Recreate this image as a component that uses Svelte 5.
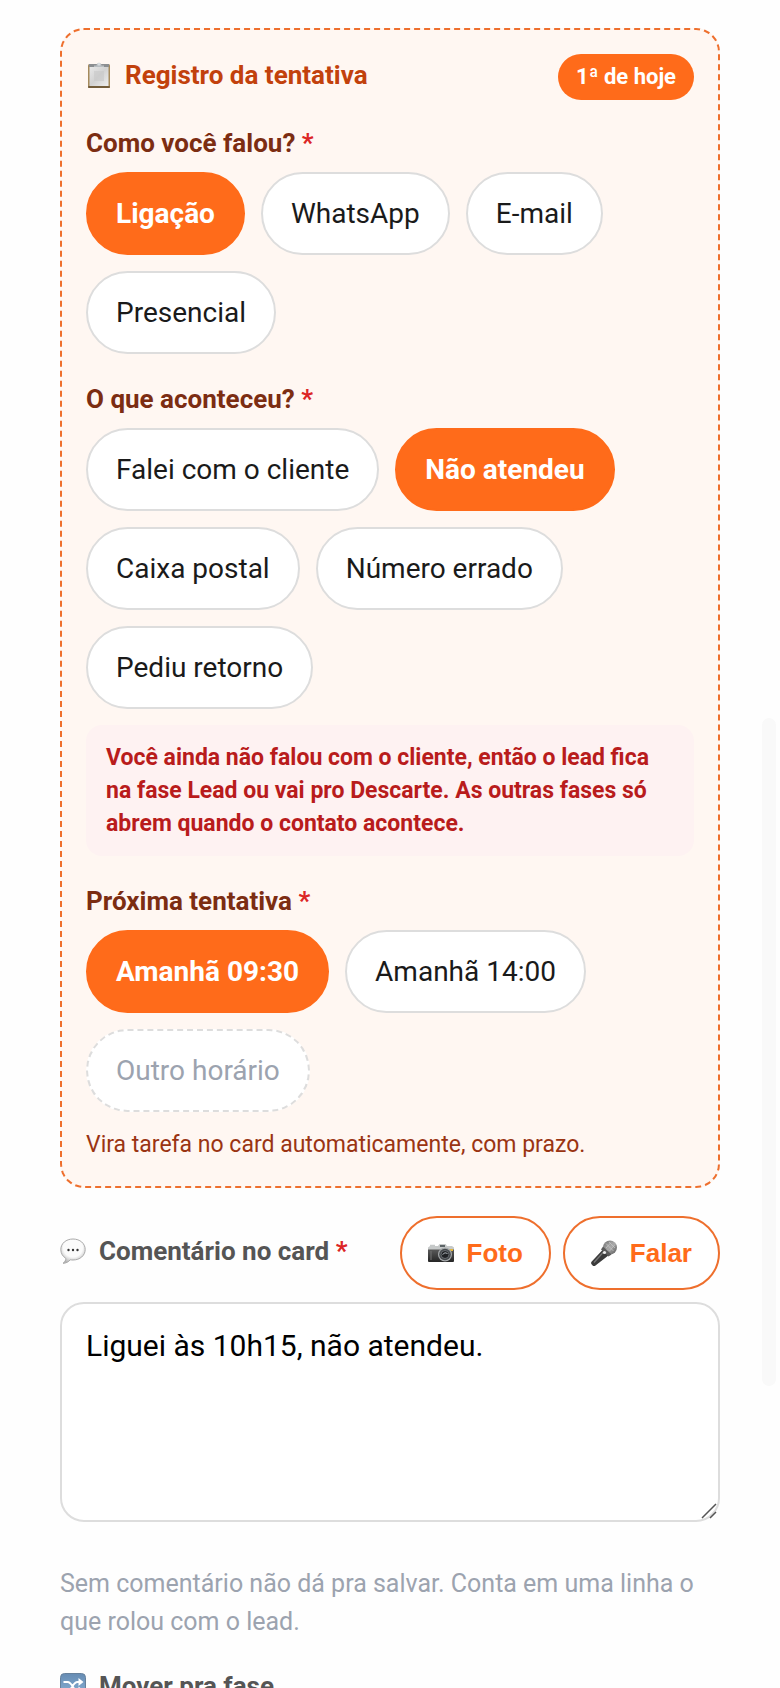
<script>
  const channels = ['Ligação', 'WhatsApp', 'E-mail', 'Presencial'];
  const outcomes = [
    'Falei com o cliente',
    'Não atendeu',
    'Caixa postal',
    'Número errado',
    'Pediu retorno'
  ];
  const slots = ['Amanhã 09:30', 'Amanhã 14:00', 'Outro horário'];

  let channel = $state('Ligação');
  let outcome = $state('Não atendeu');
  let slot = $state('Amanhã 09:30');
  let comment = $state('Liguei às 10h15, não atendeu.');
</script>

{#snippet chip(label, selected, onpick, dashed)}
  <button
    type="button"
    class="chip"
    class:selected
    class:dashed={dashed && !selected}
    aria-pressed={selected}
    onclick={onpick}
  >
    {label}
  </button>
{/snippet}

<div class="screen">
  <section class="attempt">
    <header class="attempt-head">
      <h2 class="title">
        <svg class="icon" viewBox="0 0 26 26" aria-hidden="true">
          <defs>
            <linearGradient id="paper" x1="0" y1="0" x2="1" y2="1">
              <stop offset="0" stop-color="#e9e9e9" />
              <stop offset="0.5" stop-color="#d2d2d2" />
              <stop offset="1" stop-color="#eeeeee" />
            </linearGradient>
          </defs>
          <rect x="2" y="2" width="22" height="24" rx="1.5" fill="#a58a5c" />
          <rect x="2" y="24" width="22" height="2" rx="1" fill="#735d3b" />
          <rect x="3.5" y="4" width="19" height="20" fill="url(#paper)" />
          <path d="M8 9h10v10H8z" fill="#c8c8c8" opacity=".6" />
          <path d="M3 2h20v3H3z" fill="#8b8e91" />
          <path d="M8 3.500h2.500a2.500 2.500 0 0 1 5 0H18V5H8z" fill="#b9bec2" />
          <circle cx="13" cy="2" r="1.500" fill="#d9dde0" />
        </svg>
        Registro da tentativa
      </h2>
      <span class="badge">1ª de hoje</span>
    </header>

    <div class="field" role="group" aria-labelledby="channel-label">
      <h3 class="label" id="channel-label">Como você falou? <span class="req">*</span></h3>
      <div class="chips">
        {#each channels as item}
          {@render chip(item, channel === item, () => (channel = item), false)}
        {/each}
      </div>
    </div>

    <div class="field" role="group" aria-labelledby="outcome-label">
      <h3 class="label" id="outcome-label">O que aconteceu? <span class="req">*</span></h3>
      <div class="chips">
        {#each outcomes as item}
          {@render chip(item, outcome === item, () => (outcome = item), false)}
        {/each}
      </div>
      {#if outcome !== 'Falei com o cliente'}
        <p class="warning">
          Você ainda não falou com o cliente, então o lead fica na fase Lead ou vai pro
          Descarte. As outras fases só abrem quando o contato acontece.
        </p>
      {/if}
    </div>

    <div class="field" role="group" aria-labelledby="slot-label">
      <h3 class="label" id="slot-label">Próxima tentativa <span class="req">*</span></h3>
      <div class="chips">
        {#each slots as item}
          {@render chip(item, slot === item, () => (slot = item), item === 'Outro horário')}
        {/each}
      </div>
      <p class="note">Vira tarefa no card automaticamente, com prazo.</p>
    </div>
  </section>

  <div class="comment-head">
    <label class="title dark" for="comment">
      <svg class="icon" viewBox="0 0 26 26" aria-hidden="true">
        <defs>
          <radialGradient id="bubble" cx="0.5" cy="0.35" r="0.65">
            <stop offset="0.6" stop-color="#fbfbfb" />
            <stop offset="1" stop-color="#b4b4b4" />
          </radialGradient>
        </defs>
        <path
          d="M13 1C6 1 .8 5.500.8 11.500c0 4 2 7 5 8.800.2 2-1 3.700-2.800 5 3 0 5.700-1.500 7.200-3.500.9.200 1.800.2 2.800.2 7 0 12.200-4.500 12.200-10.500S20 1 13 1z"
          fill="url(#bubble)"
          stroke="#aaaaaa"
          stroke-width="1"
        />
        <circle cx="8.500" cy="12" r="1.200" fill="#333333" />
        <circle cx="13" cy="12" r="1.200" fill="#333333" />
        <circle cx="17.500" cy="12" r="1.200" fill="#333333" />
      </svg>
      <span>Comentário no card <span class="req">*</span></span>
    </label>

    <div class="tools">
      <button type="button" class="tool">
        <svg class="icon" viewBox="0 0 26 26" aria-hidden="true">
          <defs>
            <linearGradient id="body" x1="0" y1="0" x2="0" y2="1">
              <stop offset="0" stop-color="#5a5a5a" />
              <stop offset="1" stop-color="#252525" />
            </linearGradient>
          </defs>
          <path d="M0 7.500 2 6V4.800h5V6h3l1.500-2h6L19 6h5l2 1.500V11H0z" fill="#c6c9c9" />
          <path d="M0 9.500h26V21a1 1 0 0 1-1 1H1a1 1 0 0 1-1-1z" fill="url(#body)" />
          <rect x="12" y="5" width="5" height="2" fill="#5d6467" />
          <rect x="21" y="9" width="4" height="2" fill="#e4b93b" />
          <circle cx="17" cy="14.500" r="7" fill="#a5a8aa" />
          <circle cx="17" cy="14.500" r="5.800" fill="#44484b" />
          <circle cx="17" cy="14.500" r="4" fill="#202225" stroke="#74797d" stroke-width=".8" />
          <path d="M14.500 14.500q2.500-3 5-1" fill="none" stroke="#a9b0b5" stroke-width="1" />
          <path d="M3 11v9" stroke="#747474" stroke-width="1" />
        </svg>
        Foto
      </button>
      <button type="button" class="tool">
        <svg class="icon" viewBox="0 0 26 26" aria-hidden="true">
          <defs>
            <linearGradient id="grille" x1="0" y1="0" x2="1" y2="1">
              <stop offset="0" stop-color="#6e6e6e" />
              <stop offset="0.5" stop-color="#aaaaaa" />
              <stop offset="1" stop-color="#555555" />
            </linearGradient>
          </defs>
          <path d="M12 9.500 18 15 4.500 25.500a2 2 0 0 1-3.300-.5 2.500 2.500 0 0 1-.7-3.300z" fill="#3b3b3b" />
          <path d="M12.500 12 3 22.500" stroke="#777777" stroke-width="1.300" />
          <circle cx="19" cy="7.500" r="7" fill="url(#grille)" />
          <path d="m12 6.500 8.500 8-3 2-7.500-7z" fill="#5b5b5b" />
          <path d="m15 3.500 7.500 7.500M18 2l6 6M15 8l5-5.500M18.500 11 24 4.500" stroke="#c8c8c8" stroke-width=".7" />
          <circle cx="13.500" cy="12.500" r="1.600" fill="#eeeeee" />
        </svg>
        Falar
      </button>
    </div>
  </div>

  <div class="comment-box">
    <textarea id="comment" bind:value={comment}></textarea>
    <svg class="grip" viewBox="0 0 16 16" aria-hidden="true">
      <path d="M1 15 15 1M9 15l6-6" fill="none" stroke="#555555" stroke-width="1.500" />
    </svg>
  </div>
  <p class="hint">Sem comentário não dá pra salvar. Conta em uma linha o que rolou com o lead.</p>

  <h2 class="title dark">
    <svg class="icon" viewBox="0 0 26 26" aria-hidden="true">
      <defs>
        <linearGradient id="shuffle" x1="0" y1="0" x2="0" y2="1">
          <stop offset="0" stop-color="#668cb3" />
          <stop offset="1" stop-color="#8db4d8" />
        </linearGradient>
      </defs>
      <rect x=".5" y=".5" width="25" height="25" rx="4" fill="url(#shuffle)" stroke="#66819c" />
      <path
        d="M3.500 9h4c5 0 5 8.500 10 8.500h3M3.500 17.500h4c5 0 5-8.500 10-8.500h3"
        fill="none"
        stroke="#ffffff"
        stroke-width="2"
      />
      <path d="m18.500 5 5 4-5 4zM18.500 13.500l5 4-5 4z" fill="#ffffff" />
    </svg>
    Mover pra fase
  </h2>

  <div class="scroll-thumb"></div>
</div>

<style>
  .screen {
    box-sizing: border-box;
    height: 100vh;
    overflow-y: auto;
    scrollbar-width: none;
    padding: 28px 60px 0;
    background: #fefefe;
    color: #1a1a1a;
    font-family: Roboto, 'Liberation Sans', sans-serif;
  }

  h2,
  h3,
  p {
    margin: 0;
  }

  .attempt {
    padding: 24px;
    border: 2px dashed #ee6f2d;
    border-radius: 24px;
    background: #fff7f2;
  }

  .attempt-head,
  .comment-head {
    display: flex;
    align-items: center;
    justify-content: space-between;
  }

  .attempt-head {
    margin-bottom: 28px;
  }

  .title {
    display: flex;
    align-items: center;
    gap: 13px;
    padding-bottom: 4px;
    color: #c2410c;
    font-size: 26px;
    font-weight: 700;
    line-height: 30px;
  }

  .title.dark {
    color: #555555;
  }

  .icon {
    flex: none;
    width: 26px;
    height: 26px;
  }

  .badge {
    padding: 8px 18px;
    border-radius: 24px;
    background: #ff6b1a;
    color: #ffffff;
    font-size: 22px;
    font-weight: 700;
    line-height: 30px;
  }

  .field + .field {
    margin-top: 30px;
  }

  .label {
    margin-bottom: 14px;
    color: #7c2d12;
    font-size: 26px;
    font-weight: 700;
    line-height: 30px;
  }

  .req {
    color: #dc2626;
  }

  .chips {
    display: flex;
    flex-wrap: wrap;
    gap: 16px;
  }

  .chip {
    height: 83px;
    padding: 0 28px;
    border: 2px solid #dddddd;
    border-radius: 42px;
    background: #ffffff;
    color: #1a1a1a;
    font-family: inherit;
    font-size: 28px;
    cursor: pointer;
  }

  .chip.selected {
    border-color: #ff6b1a;
    background: #ff6b1a;
    color: #ffffff;
    font-weight: 700;
  }

  .chip.dashed {
    border-style: dashed;
    color: #9ca3af;
  }

  .warning {
    margin-top: 16px;
    padding: 16px 20px;
    border-radius: 16px;
    background: #fef2f2;
    color: #b91c1c;
    font-size: 23px;
    font-weight: 700;
    line-height: 33px;
  }

  .note {
    margin-top: 16px;
    color: #9a3412;
    font-size: 23px;
    line-height: 34px;
  }

  .comment-head {
    margin: 28px 0 12px;
  }

  .tools {
    display: flex;
    gap: 12px;
  }

  .tool {
    display: flex;
    align-items: center;
    gap: 13px;
    height: 74px;
    padding: 0 26px;
    border: 2px solid #ee6f2d;
    border-radius: 37px;
    background: #ffffff;
    color: #ff6b1a;
    font-family: 'Liberation Sans', Arial, sans-serif;
    font-size: 26px;
    font-weight: 700;
    cursor: pointer;
  }

  .comment-box {
    position: relative;
  }

  textarea {
    display: block;
    box-sizing: border-box;
    width: 100%;
    height: 220px;
    padding: 22px 24px;
    border: 2px solid #dddddd;
    border-radius: 24px;
    background: #ffffff;
    color: #000000;
    font-family: inherit;
    font-size: 30px;
    line-height: 40px;
    resize: none;
  }

  .grip {
    position: absolute;
    right: 3px;
    bottom: 3px;
    width: 16px;
    height: 16px;
    pointer-events: none;
  }

  .hint {
    margin: 43px 0 30px;
    color: #9ca3af;
    font-size: 25px;
    line-height: 38px;
  }

  .scroll-thumb {
    position: fixed;
    top: 718px;
    right: 4px;
    width: 14px;
    height: 668px;
    border-radius: 7px;
    background: #f9f9f9;
  }
</style>
